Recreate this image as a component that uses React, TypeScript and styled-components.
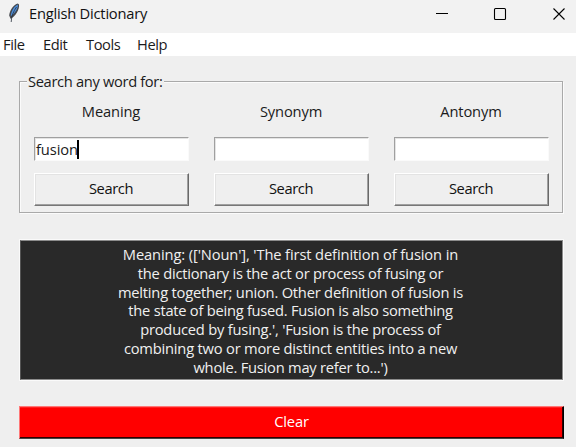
import React from "react";
import styled, { createGlobalStyle } from "styled-components";

const GlobalStyle = createGlobalStyle`
  * { box-sizing: border-box; }
  html, body { margin: 0; background: #efefef; }
  body { font-family: "Open Sans", "Noto Sans", sans-serif; font-size: 14.7px; color: #1b1b1b; overflow: hidden; }
`;

const Window = styled.div`
  width: 576px;
  height: 447px;
  display: flex;
  flex-direction: column;
  background: #efefef;
  overflow: hidden;
`;

const TitleBar = styled.header`
  height: 33px;
  flex: none;
  display: flex;
  align-items: flex-start;
  padding-left: 7px;
  background: #f2f2f2;
`;

const Feather = styled.svg`
  width: 14px;
  height: 20px;
  margin-top: 3px;
`;

const Title = styled.span`
  margin-left: 8px;
  line-height: 26px;
  letter-spacing: -0.22px;
  white-space: nowrap;
  flex: 1;
  color: #111;
`;

const Controls = styled.svg`
  width: 140px;
  height: 28px;
`;

const MenuBar = styled.nav`
  height: 23px;
  flex: none;
  display: flex;
  background: #fff;
  padding-left: 3px;
`;

const MenuItem = styled.span<{ $width: number }>`
  width: ${(p) => p.$width}px;
  line-height: 23px;
  letter-spacing: -0.45px;
  white-space: nowrap;
`;

const Content = styled.main`
  padding: 17px 12px 0 19px;
  display: flex;
  flex-direction: column;
`;

const SearchFrame = styled.fieldset`
  margin: 0;
  width: 544px;
  height: 140px;
  min-width: 0;
  padding: 0 0 0 13px;
  border: 1px solid #a9a9a9;
  box-shadow: 1px 1px #fbfbfb, inset 1px 1px #fbfbfb;
`;

const Legend = styled.legend`
  margin-left: -6px;
  padding: 0 1px;
  height: 17px;
  line-height: 16px;
  letter-spacing: -0.34px;
  white-space: nowrap;
  background: #efefef;
`;

const Columns = styled.div`
  display: flex;
  gap: 25px;
  padding-left: 1px;
`;

const Column = styled.div`
  width: 155px;
  display: flex;
  flex-direction: column;
`;

const Label = styled.label`
  height: 47px;
  padding: 11px 1px 0 0;
  line-height: 20px;
  text-align: center;
  letter-spacing: -0.15px;
`;

const Entry = styled.div`
  height: 24px;
  display: flex;
  align-items: center;
  background: #fff;
  border: 1px solid #fafafa;
  border-top-color: #a0a0a0;
  border-left-color: #a0a0a0;
  box-shadow: inset 1px 1px #e4e4e4;
  padding-left: 1px;
  letter-spacing: -0.1px;
`;

const Caret = styled.i`
  width: 2px;
  height: 19px;
  margin-left: -1px;
  background: #000;
`;

const SearchButton = styled.button`
  height: 33px;
  margin-top: 12px;
  padding: 0 1px 3px 0;
  font: inherit;
  line-height: 18px;
  color: #111;
  letter-spacing: -0.4px;
  background: #efefef;
  border: 1px solid #fff;
  border-right-color: #696969;
  border-bottom-color: #777;
  box-shadow: inset -1px -1px #a0a0a0, inset 1px 1px #e3e3e3;
`;

const Result = styled.section`
  width: 543px;
  height: 140px;
  margin: 27px 0 0 1px;
  padding: 4px 2px 0 0;
  display: flex;
  flex-direction: column;
  align-items: center;
  background: #292929;
  border: 1px solid #8c8c8c;
  border-left-color: #555;
  box-shadow: 0 0 0 1px #fafafa;
  color: #f0f0f0;
`;

const Line = styled.span<{ $spacing: number }>`
  height: 18.8px;
  line-height: 19px;
  letter-spacing: ${(p) => p.$spacing}px;
  white-space: pre;
`;

const ClearButton = styled.button`
  width: 545px;
  height: 33px;
  margin-top: 26px;
  padding: 0 0 3px;
  font: inherit;
  line-height: 18px;
  letter-spacing: -0.2px;
  color: #fff;
  background: #f00;
  border: 1px solid #ff7777;
  border-right-color: #000;
  border-bottom-color: #444;
  box-shadow: inset -1px -1px #300000, inset 0 1px #ff2020;
`;

const menus = [
  { name: "File", width: 40 },
  { name: "Edit", width: 43 },
  { name: "Tools", width: 51 },
  { name: "Help", width: 40 },
];

const searches = [
  { label: "Meaning", value: "fusion" },
  { label: "Synonym", value: "" },
  { label: "Antonym", value: "" },
];

const definition = [
  { text: "Meaning: (['Noun'], 'The first definition of fusion in", spacing: -0.12 },
  { text: "the dictionary is the act or process of fusing or", spacing: -0.23 },
  { text: "melting together; union. Other definition of fusion is", spacing: -0.21 },
  { text: "the state of being fused. Fusion is also something", spacing: -0.25 },
  { text: "produced by fusing.', 'Fusion is the process of", spacing: -0.2 },
  { text: "combining two or more distinct entities into a new", spacing: -0.2 },
  { text: "whole. Fusion may refer to...')", spacing: -0.23 },
];

export default function App() {
  return (
    <>
      <GlobalStyle />
      <Window>
        <TitleBar>
          <Feather viewBox="0 0 14 20">
            <path d="M10.8 .5C7 1.3 2.5 7 2.2 12.5l1.3 3.3C8.5 13.5 12.8 6 12 1.5z" fill="#45484e" />
            <path d="M10.9 1.5C7.5 3 4.2 7.5 3.8 13.2c4-3 7.3-7.3 7.1-11.7z" fill="#4c8fdd" />
            <path d="M9.5 4C6.5 8.5 4.3 13 4.2 19" fill="none" stroke="#28313d" strokeWidth=".8" />
          </Feather>
          <Title>English Dictionary</Title>
          <Controls viewBox="0 0 140 28" fill="none" stroke="#000">
            <path d="M0 13.5h12" />
            <rect x="58.5" y="8.5" width="11" height="11" rx="1" strokeWidth="1.1" />
            <path d="M117.5 8.5l11 11M128.5 8.5l-11 11" strokeWidth="1.1" />
          </Controls>
        </TitleBar>
        <MenuBar>
          {menus.map((m) => (
            <MenuItem key={m.name} $width={m.width}>{m.name}</MenuItem>
          ))}
        </MenuBar>
        <Content>
          <SearchFrame>
            <Legend>Search any word for:</Legend>
            <Columns>
              {searches.map((s) => (
                <Column key={s.label}>
                  <Label>{s.label}</Label>
                  <Entry>
                    {s.value}
                    {s.value && <Caret />}
                  </Entry>
                  <SearchButton>Search</SearchButton>
                </Column>
              ))}
            </Columns>
          </SearchFrame>
          <Result>
            {definition.map((l) => (
              <Line key={l.text} $spacing={l.spacing}>{l.text}</Line>
            ))}
          </Result>
          <ClearButton>Clear</ClearButton>
        </Content>
      </Window>
    </>
  );
}
